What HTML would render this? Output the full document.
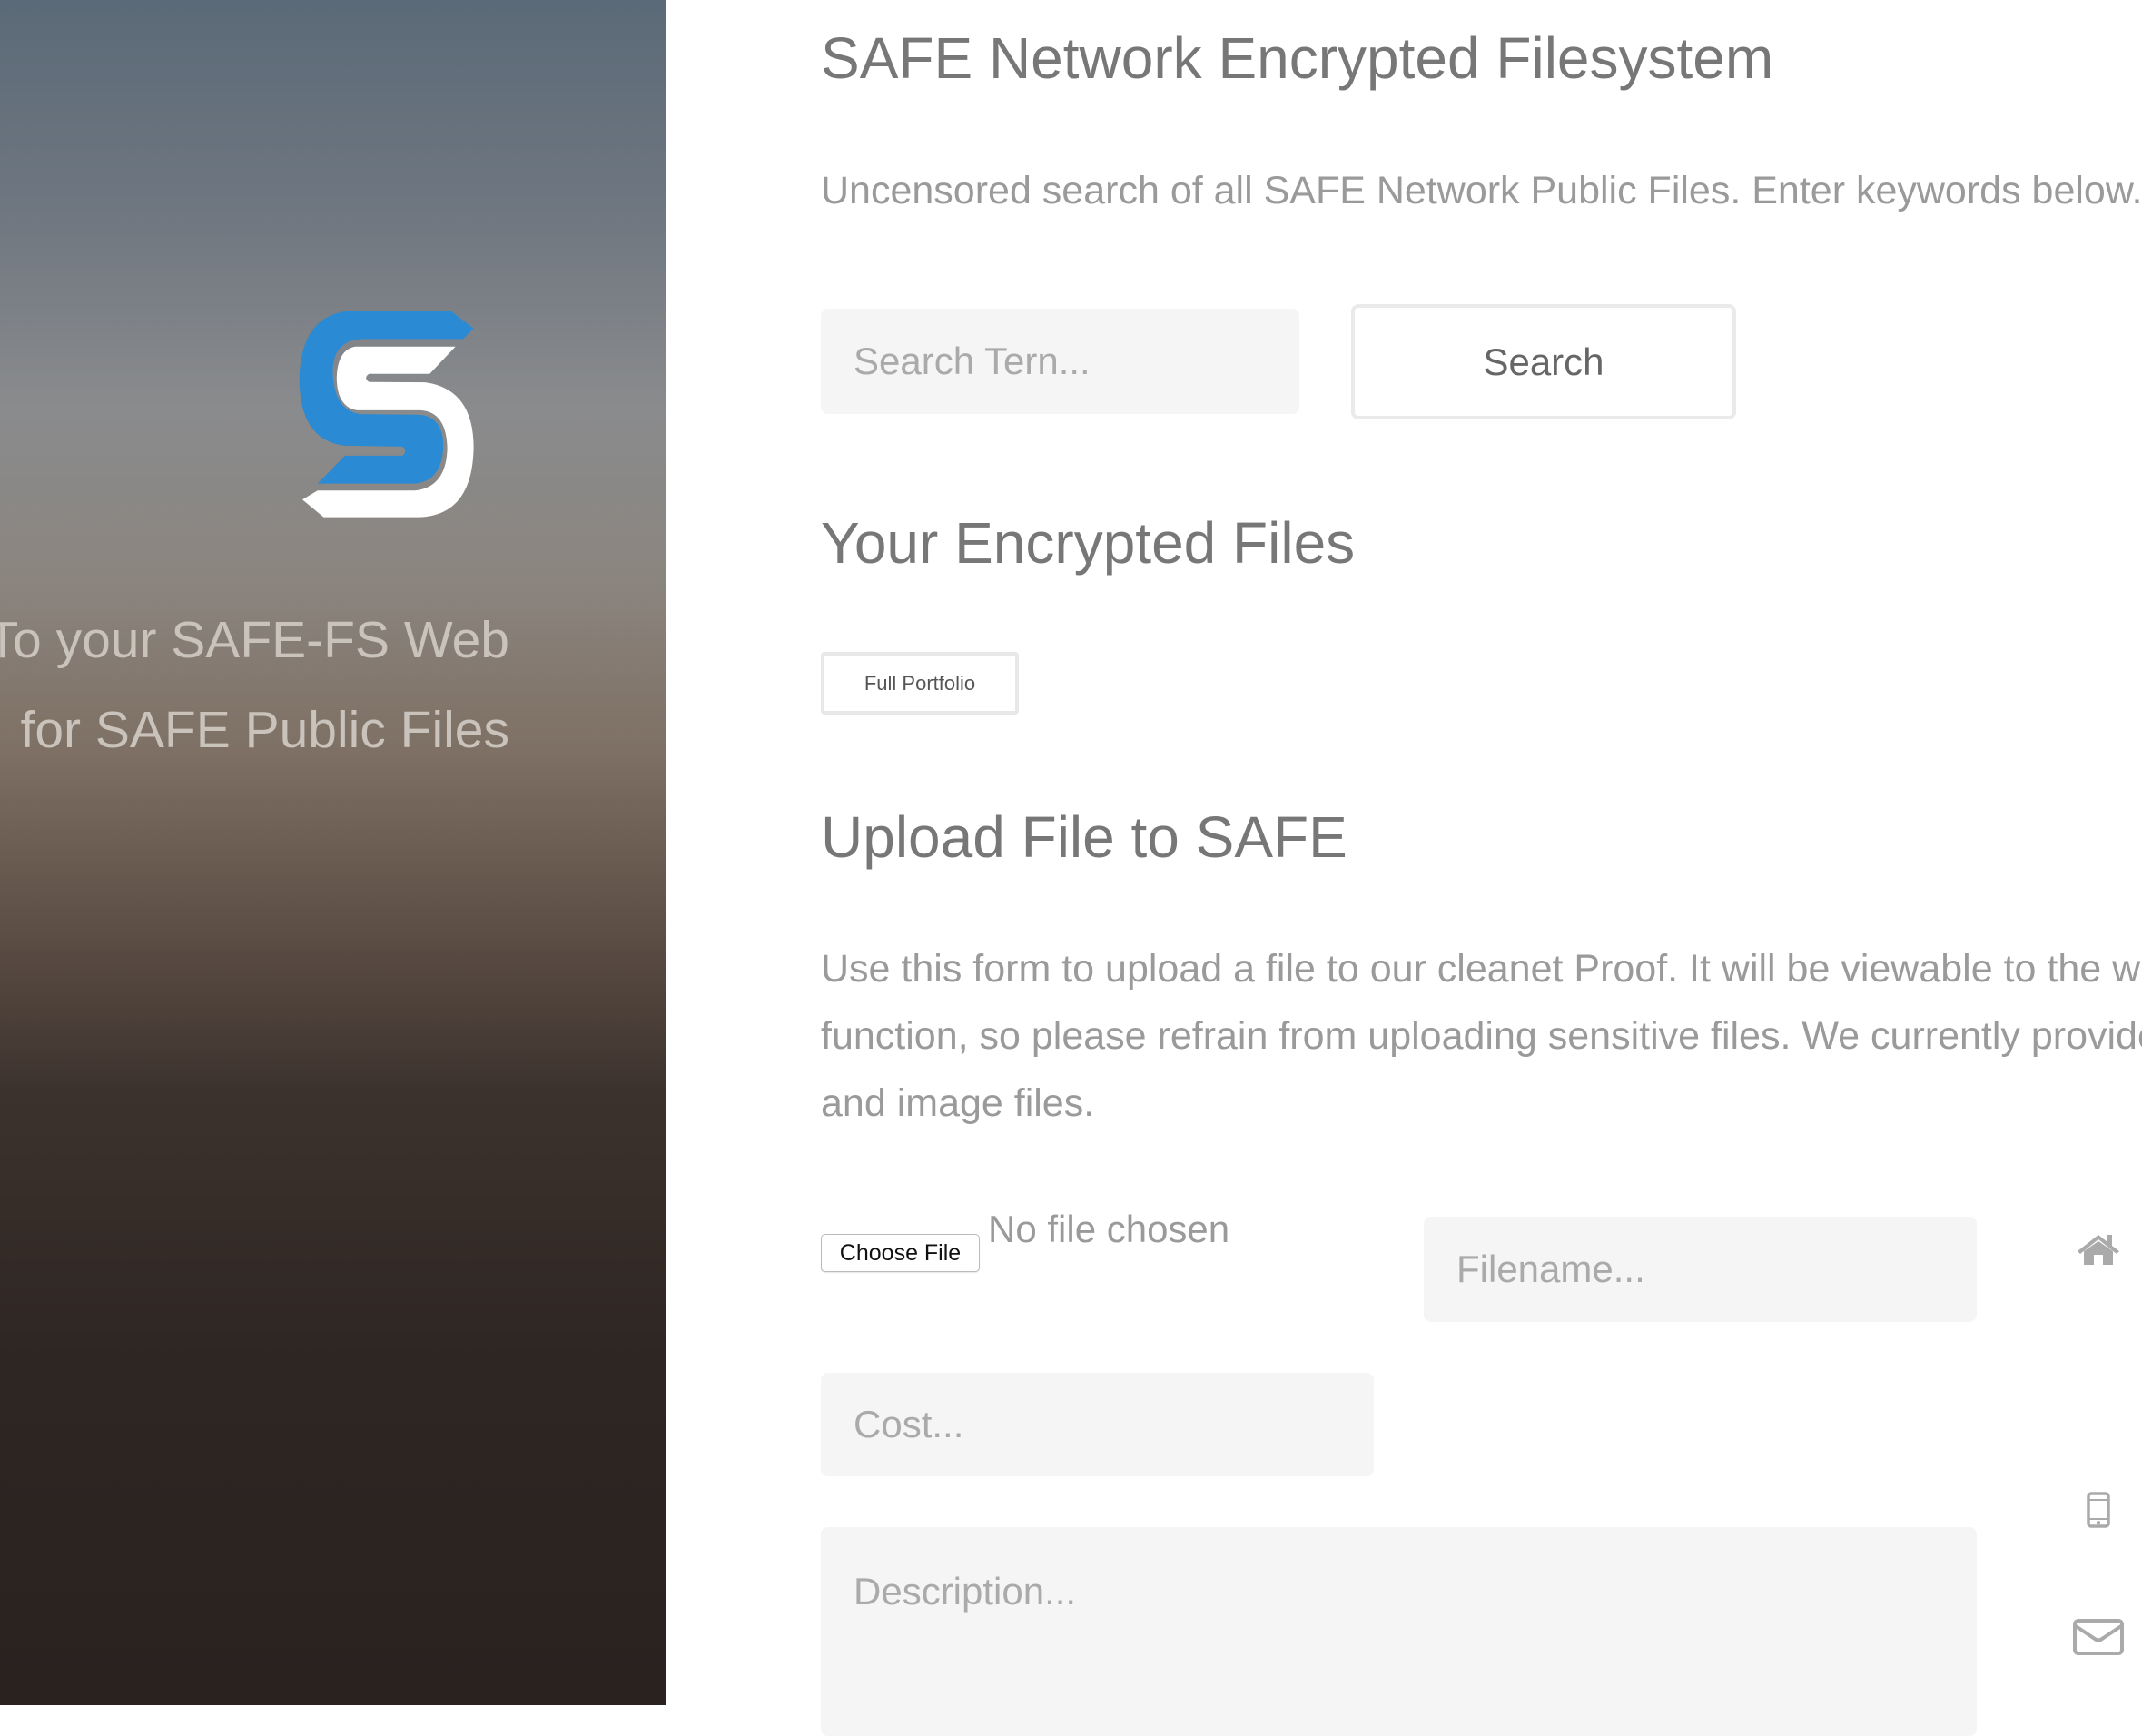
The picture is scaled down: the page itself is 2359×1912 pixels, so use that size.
<!DOCTYPE html>
<html><head><meta charset="utf-8"><style>
*{margin:0;padding:0;box-sizing:border-box}
html,body{width:2359px;height:1881px;overflow:hidden;background:#fff;font-family:"Liberation Sans",sans-serif}
.left{position:absolute;left:0;top:0;width:734px;height:1878px;background:linear-gradient(180deg,#5b6a78 0%,#6e7680 12%,#8a8b8d 24%,#8b857f 34%,#7e7064 44%,#5f5047 54%,#3c322d 64%,#2e2623 80%,#2a221f 100%)}
.lt{position:absolute;color:#c9c3bc;font-size:57px;white-space:nowrap;text-align:right}
.a{position:absolute;white-space:nowrap}
.h{color:#777;font-size:64px}
.p{color:#9a9a9a;font-size:43px}
.inp{position:absolute;background:#f5f5f5;border-radius:8px;color:#aaa;font-size:42px;padding-left:36px}
</style></head><body>
<div class="left">
<svg style="position:absolute;left:328px;top:340px" width="197" height="232" viewBox="90 60 580 695">
<path fill="#2a8ad3" d="M250,68 L590,68 L665,125 L630,160 L290,160 Q200,168 200,270 Q205,395 290,408 L490,410 Q565,420 565,515 Q560,630 470,637 L150,637 L240,545 L430,545 Q448,530 430,515 L240,512 Q90,495 90,290 Q95,85 250,68 Z"/>
<path fill="#fff" d="M275,185 L605,185 L520,275 L320,275 Q300,288 320,302 L505,303 Q665,325 665,520 Q660,745 480,748 L170,748 L100,690 L150,660 L470,660 Q575,650 578,520 Q575,400 490,395 L280,395 Q215,385 213,290 Q215,195 275,185 Z"/>
</svg>
<div class="lt" style="top:672px;right:173px">To your SAFE-FS Web</div>
<div class="lt" style="top:771px;right:173px">for SAFE Public Files</div>
</div>

<div class="a h" style="left:904px;top:27px">SAFE Network Encrypted Filesystem</div>
<div class="a p" style="left:904px;top:186px">Uncensored search of all SAFE Network Public Files. Enter keywords below.</div>

<div class="inp" style="left:904px;top:340px;width:527px;height:116px;line-height:116px">Search Tern...</div>
<div class="a" style="left:1488px;top:335px;width:424px;height:127px;border:4px solid #eaeaea;border-radius:8px;text-align:center;line-height:119px;color:#666;font-size:42px">Search</div>

<div class="a h" style="left:904px;top:561px">Your Encrypted Files</div>
<div class="a" style="left:904px;top:718px;width:218px;height:69px;border:4px solid #e8e8e8;border-radius:4px;text-align:center;line-height:61px;color:#555;font-size:22px">Full Portfolio</div>

<div class="a h" style="left:904px;top:885px">Upload File to SAFE</div>
<div class="a p" style="left:904px;top:1030px;line-height:74px">Use this form to upload a file to our cleanet Proof. It will be viewable to the world<br>function, so please refrain from uploading sensitive files. We currently provide<br>and image files.</div>

<div class="a" style="left:904px;top:1359px;width:175px;height:42px;border:1px solid #bbb;border-radius:5px;background:#fff;text-align:center;line-height:40px;font-size:25px;color:#111;box-shadow:0 1px 1px rgba(0,0,0,.1)">Choose File</div>
<div class="a p" style="left:1088px;top:1330px;font-size:42px">No file chosen</div>

<div class="inp" style="left:1568px;top:1340px;width:609px;height:116px;line-height:116px">Filename...</div>
<div class="inp" style="left:904px;top:1512px;width:609px;height:114px;line-height:114px">Cost...</div>
<div class="inp" style="left:904px;top:1682px;width:1273px;height:230px;padding-top:46px;line-height:50px">Description...</div>

<svg style="position:absolute;left:2286px;top:1358px" width="50" height="36" viewBox="0 0 50 36">
<path fill="#aaa" d="M25,2 L2,20 L5,23 L25,7 L45,23 L48,20 L40,14 L40,2 L35,2 L35,10 Z"/>
<path fill="#aaa" d="M9,20 L25,9 L41,20 L41,35 L30,35 L30,24 L20,24 L20,35 L9,35 Z"/>
</svg>
<svg style="position:absolute;left:2298px;top:1643px" width="26" height="40" viewBox="0 0 26 40">
<rect x="2" y="2" width="22" height="36" rx="3" fill="none" stroke="#aaa" stroke-width="3.5"/>
<line x1="2" y1="9" x2="24" y2="9" stroke="#aaa" stroke-width="2"/><line x1="2" y1="30" x2="24" y2="30" stroke="#aaa" stroke-width="2"/>
<circle cx="13" cy="34" r="2" fill="#aaa"/>
</svg>
<svg style="position:absolute;left:2283px;top:1783px" width="56" height="40" viewBox="0 0 56 40">
<rect x="2" y="2" width="52" height="36" rx="4" fill="none" stroke="#aaa" stroke-width="4"/>
<path d="M3,8 L24,22 Q28,25 32,22 L53,8" fill="none" stroke="#aaa" stroke-width="4"/>
</svg>
</body></html>
